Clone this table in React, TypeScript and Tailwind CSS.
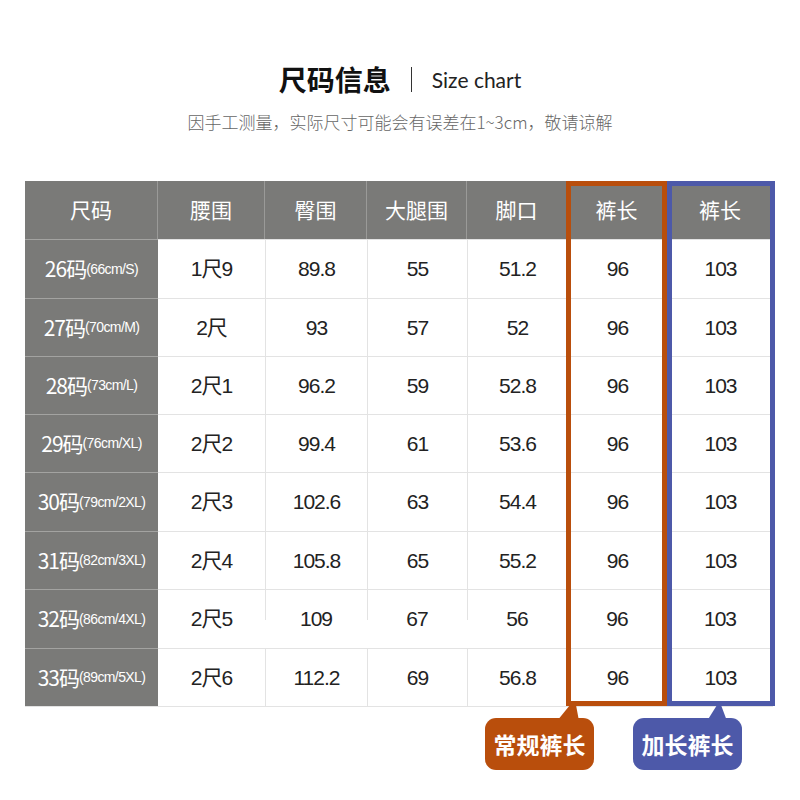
import React from "react";

const CJK = "font-['Noto_Sans_CJK_SC','Noto_Sans',sans-serif]";

type Row = {
  size: string;
  note: string;
  waist: string;
  hip: string;
  thigh: string;
  hem: string;
  reg: string;
  long: string;
};

const rows: Row[] = [
  { size: "26", note: "(66cm/S)", waist: "1尺9", hip: "89.8", thigh: "55", hem: "51.2", reg: "96", long: "103" },
  { size: "27", note: "(70cm/M)", waist: "2尺", hip: "93", thigh: "57", hem: "52", reg: "96", long: "103" },
  { size: "28", note: "(73cm/L)", waist: "2尺1", hip: "96.2", thigh: "59", hem: "52.8", reg: "96", long: "103" },
  { size: "29", note: "(76cm/XL)", waist: "2尺2", hip: "99.4", thigh: "61", hem: "53.6", reg: "96", long: "103" },
  { size: "30", note: "(79cm/2XL)", waist: "2尺3", hip: "102.6", thigh: "63", hem: "54.4", reg: "96", long: "103" },
  { size: "31", note: "(82cm/3XL)", waist: "2尺4", hip: "105.8", thigh: "65", hem: "55.2", reg: "96", long: "103" },
  { size: "32", note: "(86cm/4XL)", waist: "2尺5", hip: "109", thigh: "67", hem: "56", reg: "96", long: "103" },
  { size: "33", note: "(89cm/5XL)", waist: "2尺6", hip: "112.2", thigh: "69", hem: "56.8", reg: "96", long: "103" },
];

const headers = ["尺码", "腰围", "臀围", "大腿围", "脚口", "裤长", "裤长"];

export default function App() {
  return (
    <div className="w-[800px] h-[800px] bg-white overflow-hidden">
      {/* title */}
      <div className="flex items-center justify-center gap-[20px] pt-[60px] h-[98px]">
        <span className={`${CJK} text-[28px] font-bold text-[#111] leading-none`}>
          尺码信息
        </span>
        <span className="w-px h-[25px] bg-[#333]" />
        <span className="font-['Lato',sans-serif] text-[21px] text-[#222] leading-none">
          Size chart
        </span>
      </div>
      <div
        className={`${CJK} text-center text-[17px] font-light text-[#666] mt-[15px] leading-none`}
      >
        因手工测量，实际尺寸可能会有误差在1~3cm，敬请谅解
      </div>

      {/* table */}
      <div className="relative ml-[25px] mt-[51px] w-[748px]">
        <div className="grid grid-cols-[133px_107px_102px_100px_100px_100px_106px] grid-rows-[58px_59px_58px_58px_58px_59px_58px_59px_58px] border-b border-[#e3e3e3]">
          {headers.map((h, i) => (
            <div
              key={i}
              className={`${CJK} flex items-center justify-center bg-[#7a7a78] text-white text-[21px] ${
                i < headers.length - 1 ? "border-r border-[#9a9a98]" : ""
              }`}
            >
              {h}
            </div>
          ))}
          {rows.map((r, ri) => {
            const partial = ri === 6;
            const cells = [r.waist, r.hip, r.thigh, r.hem, r.reg, r.long];
            return (
              <React.Fragment key={r.size}>
                <div className="flex items-center justify-center bg-[#7a7a78] border-t border-[#a3a3a1] text-white tracking-[-1px]">
                  <span className={`${CJK} text-[21px]`}>{r.size}码</span>
                  <span className="font-['Liberation_Sans',sans-serif] text-[14px] tracking-[-0.6px]">
                    {r.note}
                  </span>
                </div>
                {cells.map((c, ci) => (
                  <div
                    key={ci}
                    className={`flex items-center justify-center border-t border-[#e3e3e3] text-[#222] text-[21px] tracking-[-1px] font-['Liberation_Sans','Noto_Sans_CJK_SC',sans-serif] ${
                      ci === 0
                        ? ""
                        : partial
                        ? "bg-[linear-gradient(#e3e3e3,#e3e3e3)] bg-no-repeat bg-[length:1px_30px] bg-left-top"
                        : "border-l"
                    }`}
                  >
                    {c}
                  </div>
                ))}
              </React.Fragment>
            );
          })}
        </div>

        {/* highlight frames */}
        <div className="absolute left-[541px] top-0 w-[101px] h-[525px] border-[5px] border-[#b94e0c]" />
        <div className="absolute left-[642px] top-0 w-[108px] h-[525px] border-[5px] border-[#4d59a9]" />
      </div>

      {/* labels */}
      <div className="flex mt-[11px] ml-[485px] gap-[39px]">
        <div className="relative">
          <svg
            className="absolute left-[66px] -top-[13px]"
            width="30"
            height="16"
            viewBox="0 0 30 16"
          >
            <polygon points="19,0 25,0 28,16 6,16" fill="#b94e0c" />
          </svg>
          <div
            className={`${CJK} relative w-[109px] h-[52px] rounded-[11px] bg-[#b94e0c] text-white text-[23px] font-bold flex items-center justify-center`}
          >
            常规裤长
          </div>
        </div>
        <div className="relative">
          <svg
            className="absolute left-[70px] -top-[13px]"
            width="30"
            height="16"
            viewBox="0 0 30 16"
          >
            <polygon points="14,0 18,0 24,16 4,16" fill="#4d59a9" />
          </svg>
          <div
            className={`${CJK} relative w-[109px] h-[52px] rounded-[11px] bg-[#4d59a9] text-white text-[23px] font-bold flex items-center justify-center`}
          >
            加长裤长
          </div>
        </div>
      </div>
    </div>
  );
}
